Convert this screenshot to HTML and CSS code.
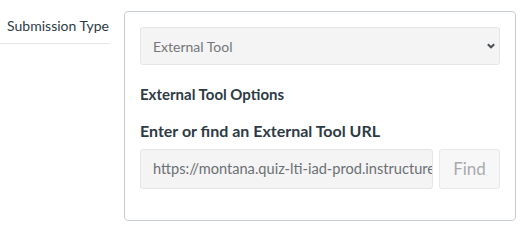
FILE: index.html
```html
<!DOCTYPE html>
<html>
<head>
<meta charset="utf-8">
<link rel="stylesheet" href="styles.css">
</head>
<body>
<div class="row">
  <div class="label-col">
    <div class="label">Submission Type</div>
  </div>
  <div class="panel">
    <div class="select">
      <span class="select-text">External Tool</span>
      <svg class="chev" width="10" height="8" viewBox="0 0 10 8"><path d="M1.8 2.2 L5 5.3 L8.2 2.2" fill="none" stroke="#4a4f54" stroke-width="2"/></svg>
    </div>
    <div class="opts">External Tool Options</div>
    <div class="urlhead">Enter or find an External Tool URL</div>
    <div class="urlrow">
      <div class="urlinput">https://montana.quiz-lti-iad-prod.instructure</div>
      <div class="find">Find</div>
    </div>
  </div>
</div>
</body>
</html>
```

FILE: styles.css
```css
html, body { margin: 0; padding: 0; background: #fff; }
body { font-family: Lato, "Open Sans", sans-serif; color: #2d3b45; }
.row { display: flex; align-items: flex-start; padding-top: 11px; }
.label-col { width: 110px; flex: none; }
.label {
  font-size: 14px; line-height: 20px; text-align: right; padding: 5px 1px 7px 0;
  border-bottom: 1px solid #e4e6e8; color: #2d3b45;
}
.panel {
  margin-left: 14px; width: 392px; box-sizing: border-box; height: 210px;
  border: 1px solid #c7cdd1; border-radius: 4px; padding: 15px 15px;
}
.select {
  height: 38px; box-sizing: border-box; border: 1px solid #e3e5e7; border-radius: 3px;
  background: #f4f4f4; display: flex; align-items: center; justify-content: space-between;
  padding: 0 3px 0 12px;
}
.select-text { font-size: 14px; color: #73777b; }
.chev { margin-right: 0; }
.opts { font-size: 15px; font-weight: bold; margin-top: 21px; line-height: 17px; }
.urlhead { font-size: 16px; font-weight: bold; margin-top: 18px; line-height: 20px; }
.urlrow { display: flex; gap: 6px; margin-top: 8px; }
.urlinput {
  width: 293px; height: 40px; box-sizing: border-box; border: 1px solid #e3e5e7; border-radius: 3px;
  background: #f4f4f4; font-size: 14.6px; color: #6b7075; padding: 0 0 0 12px; line-height: 38px;
  white-space: nowrap; overflow: hidden;
}
.find {
  flex: 1; height: 40px; box-sizing: border-box; border: 1px solid #e6e8ea; border-radius: 3px;
  background: #f7f7f7; color: #a8abae; font-size: 17px; line-height: 38px; text-align: center;
}
```
